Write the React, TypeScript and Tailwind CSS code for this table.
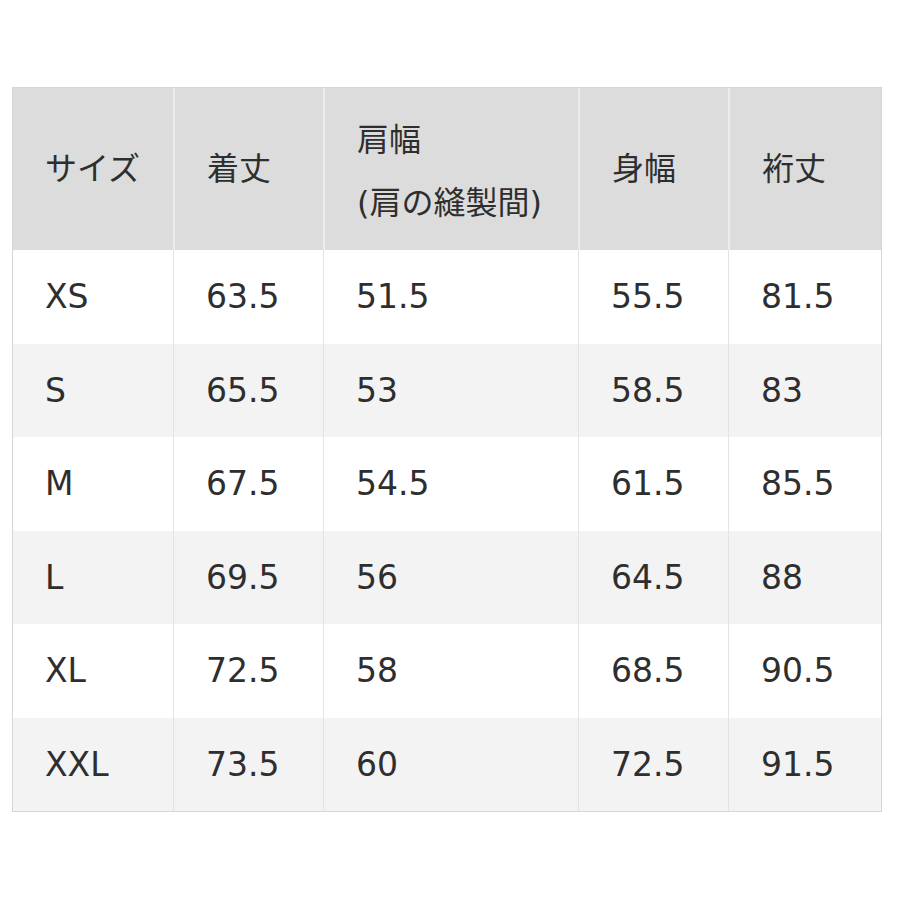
const headers: React.ReactNode[] = [
  "サイズ",
  "着丈",
  <>
    肩幅
    <br />
    (肩の縫製間)
  </>,
  "身幅",
  "裄丈",
];

const rows = [
  ["XS", "63.5", "51.5", "55.5", "81.5"],
  ["S", "65.5", "53", "58.5", "83"],
  ["M", "67.5", "54.5", "61.5", "85.5"],
  ["L", "69.5", "56", "64.5", "88"],
  ["XL", "72.5", "58", "68.5", "90.5"],
  ["XXL", "73.5", "60", "72.5", "91.5"],
];

const cols = "grid grid-cols-[160px_150px_255px_150px_153px]";

export default function App() {
  return (
    <div
      className="w-[900px] h-[900px] bg-white pt-[87px] pl-[12px] text-[#2e2e2e]"
      style={{ fontFamily: '"DejaVu Sans", "Noto Sans CJK JP", sans-serif' }}
    >
      <div className="w-[870px] border border-[#d6d6d6]">
        <div className={`${cols} h-[162px] bg-[#dcdcdc]`}>
          {headers.map((h, i) => (
            <div
              key={i}
              className={`flex items-center pl-[32px] text-[32px] leading-[63px] ${
                i > 0 ? "border-l-2 border-[#ebebeb]" : ""
              }`}
            >
              <div className={i === 2 ? "pt-[6px]" : ""}>{h}</div>
            </div>
          ))}
        </div>
        {rows.map((r, ri) => (
          <div
            key={ri}
            className={`${cols} h-[93.5px] ${ri % 2 === 0 ? "bg-white" : "bg-[#f3f3f3]"}`}
          >
            {r.map((c, ci) => (
              <div
                key={ci}
                className={`flex items-center pl-[32px] text-[33px] ${
                  ci > 0 ? "border-l border-[#e3e3e3]" : ""
                }`}
              >
                {c}
              </div>
            ))}
          </div>
        ))}
      </div>
    </div>
  );
}
